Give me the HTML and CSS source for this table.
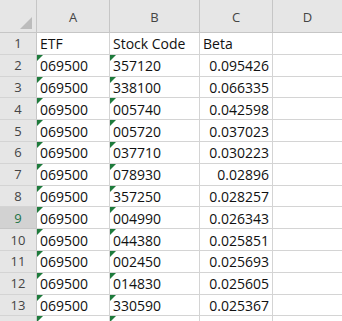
FILE: index.html
```html
<!DOCTYPE html>
<html>
<head>
  <title>Sheet1</title>
  <meta name="viewport" content="width=device-width,initial-scale=1">
  <link rel="stylesheet" href="styles.css">
</head>

<body class="sheet-page">
  <div class="sheet">
    <div class="corner"><span class="corner_mark"></span></div>
    <div class="col-head">A</div>
    <div class="col-head">B</div>
    <div class="col-head">C</div>
    <div class="col-head">D</div>

    <div class="row-head">1</div>
    <div class="cell">ETF</div>
    <div class="cell">Stock Code</div>
    <div class="cell">Beta</div>
    <div class="cell"></div>

    <div class="row-head">2</div>
    <div class="cell text-num">069500</div>
    <div class="cell text-num">357120</div>
    <div class="cell num">0.095426</div>
    <div class="cell"></div>

    <div class="row-head">3</div>
    <div class="cell text-num">069500</div>
    <div class="cell text-num">338100</div>
    <div class="cell num">0.066335</div>
    <div class="cell"></div>

    <div class="row-head">4</div>
    <div class="cell text-num">069500</div>
    <div class="cell text-num">005740</div>
    <div class="cell num">0.042598</div>
    <div class="cell"></div>

    <div class="row-head">5</div>
    <div class="cell text-num">069500</div>
    <div class="cell text-num">005720</div>
    <div class="cell num">0.037023</div>
    <div class="cell"></div>

    <div class="row-head">6</div>
    <div class="cell text-num">069500</div>
    <div class="cell text-num">037710</div>
    <div class="cell num">0.030223</div>
    <div class="cell"></div>

    <div class="row-head">7</div>
    <div class="cell text-num">069500</div>
    <div class="cell text-num">078930</div>
    <div class="cell num">0.02896</div>
    <div class="cell"></div>

    <div class="row-head">8</div>
    <div class="cell text-num">069500</div>
    <div class="cell text-num">357250</div>
    <div class="cell num">0.028257</div>
    <div class="cell"></div>

    <div class="row-head row-head--active">9</div>
    <div class="cell text-num">069500</div>
    <div class="cell text-num">004990</div>
    <div class="cell num">0.026343</div>
    <div class="cell"></div>

    <div class="row-head">10</div>
    <div class="cell text-num">069500</div>
    <div class="cell text-num">044380</div>
    <div class="cell num">0.025851</div>
    <div class="cell"></div>

    <div class="row-head">11</div>
    <div class="cell text-num">069500</div>
    <div class="cell text-num">002450</div>
    <div class="cell num">0.025693</div>
    <div class="cell"></div>

    <div class="row-head">12</div>
    <div class="cell text-num">069500</div>
    <div class="cell text-num">014830</div>
    <div class="cell num">0.025605</div>
    <div class="cell"></div>

    <div class="row-head">13</div>
    <div class="cell text-num">069500</div>
    <div class="cell text-num">330590</div>
    <div class="cell num">0.025367</div>
    <div class="cell"></div>

    <!-- row 14 is only a sliver at the bottom edge -->
    <div class="row-head"></div>
    <div class="cell text-num"></div>
    <div class="cell text-num"></div>
    <div class="cell"></div>
    <div class="cell"></div>
  </div>
</body>
</html>
```

FILE: styles.css
```css
html,
body {
  margin: 0;
  height: 100%;
  overflow: hidden;
  background: #fff;
}

.sheet-page {
  font-family: 'Open Sans', 'Liberation Sans', sans-serif;
  font-size: 14px;
  color: #111;
}

.sheet {
  display: grid;
  grid-template-columns: 37px 73px 90px 73px 70px;
  grid-template-rows: 33px repeat(13, 21.8px) 10px;
}

.corner,
.col-head,
.row-head {
  box-sizing: border-box;
  background: #e6e6e6;
  color: #444;
  display: flex;
  align-items: center;
  justify-content: center;
}

.corner {
  position: relative;
  border-right: 1px solid #c6c6c6;
  border-bottom: 1px solid #c6c6c6;
}

.corner_mark {
  position: absolute;
  right: 4px;
  bottom: 3px;
  width: 0;
  height: 0;
  border-left: 12px solid transparent;
  border-bottom: 12px solid #bcbcbc;
}

.col-head {
  font-size: 13px;
  padding-top: 2px;
  border-right: 1px solid #c6c6c6;
  border-bottom: 1px solid #c6c6c6;
}

.row-head {
  font-size: 13px;
  border-right: 1px solid #c6c6c6;
  border-bottom: 1px solid #d4d4d4;
}

.row-head--active {
  background: #d2d2d2;
  color: #217346;
  border-bottom-color: #c6c6c6;
}

.cell {
  position: relative;
  box-sizing: border-box;
  display: flex;
  align-items: center;
  padding: 1px 3px 0 3px;
  white-space: nowrap;
  overflow: hidden;
  border-right: 1px solid #d4d4d4;
  border-bottom: 1px solid #d4d4d4;
}

.num {
  justify-content: flex-end;
}

/* number stored as text flag */
.text-num:before {
  content: '';
  position: absolute;
  top: 0;
  left: 0;
  width: 0;
  height: 0;
  border-top: 6px solid #1e7b3c;
  border-right: 6px solid transparent;
}
```
